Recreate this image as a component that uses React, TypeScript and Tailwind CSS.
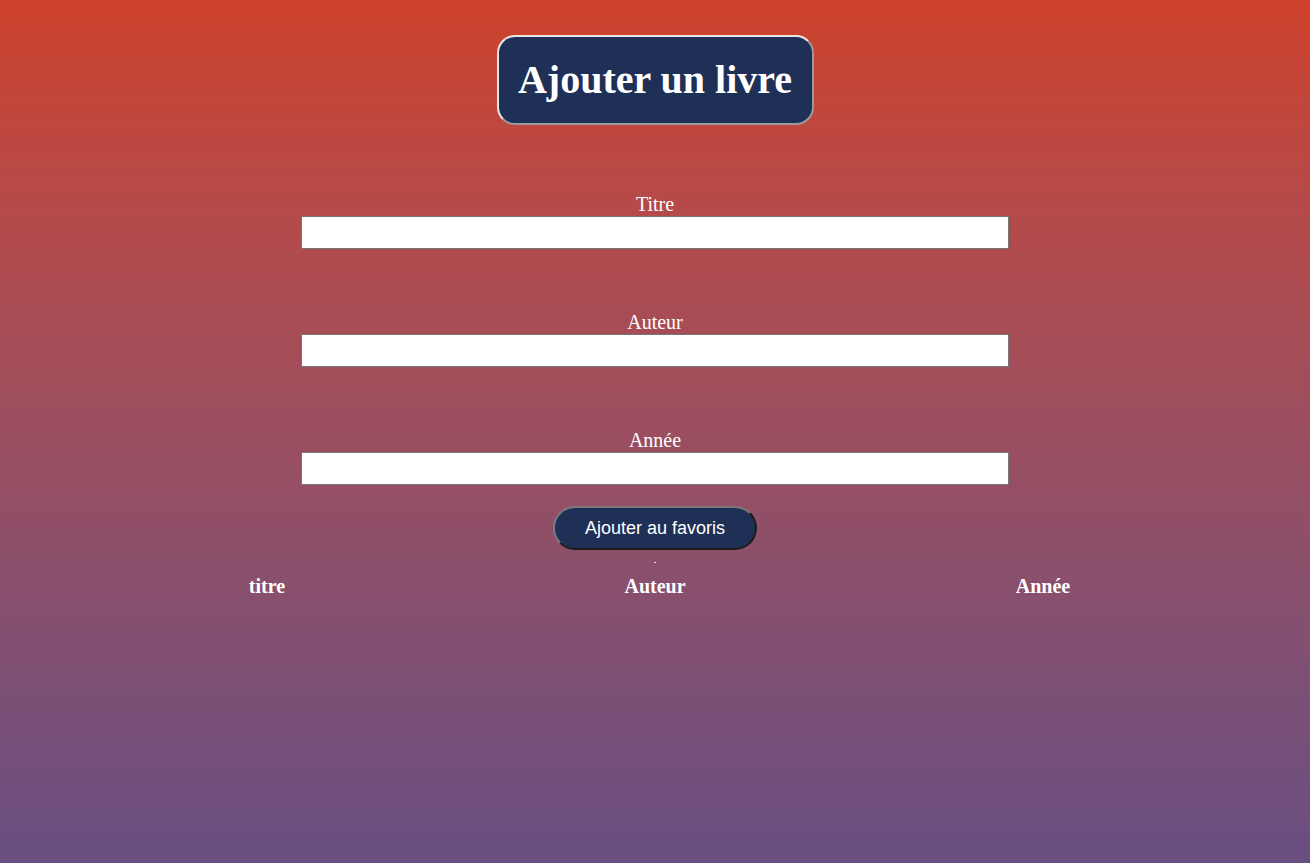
export default function App() {
  const fields = ["Titre", "Auteur", "Année"];
  return (
    <div
      className="min-h-[863px] w-full bg-gradient-to-b from-[#cd412a] to-[#684e82] pt-[35px] text-white"
      style={{ fontFamily: '"Liberation Serif", "Times New Roman", serif' }}
    >
      <div className="flex justify-center">
        <h1 className="flex h-[90px] w-[317px] items-center justify-center rounded-[18px] border-2 border-t-[#e6e6e6] border-l-[#e6e6e6] border-r-[#9a9a9a] border-b-[#9a9a9a] bg-[#1f3057] text-[40px] font-bold leading-none">
          Ajouter un livre
        </h1>
      </div>

      <form className="mt-[68px] flex flex-col items-center">
        {fields.map((f, i) => (
          <div key={f} className={`flex flex-col items-center ${i > 0 ? "mt-[62px]" : ""}`}>
            <label className="text-[20px] leading-[23px]">{f}</label>
            <input
              type="text"
              className="h-[33px] w-[708px] border border-[#767676] bg-white text-black outline-none"
            />
          </div>
        ))}
        <button
          type="button"
          className="mt-[21px] h-[44px] w-[204px] rounded-full border-2 border-t-[#7a7a7a] border-l-[#7a7a7a] border-r-[#1c1c1c] border-b-[#1c1c1c] bg-[#1f3057] text-[18px] text-white"
          style={{ fontFamily: '"Liberation Sans", Arial, sans-serif' }}
        >
          Ajouter au favoris
        </button>
        <span className="mt-[12px] h-[1px] w-[2px] bg-white/80" />
      </form>

      <div className="mx-auto mt-[12px] grid w-[1164px] grid-cols-3 text-center text-[20px] font-bold leading-[23px]">
        <div>titre</div>
        <div>Auteur</div>
        <div>Année</div>
      </div>
    </div>
  );
}
